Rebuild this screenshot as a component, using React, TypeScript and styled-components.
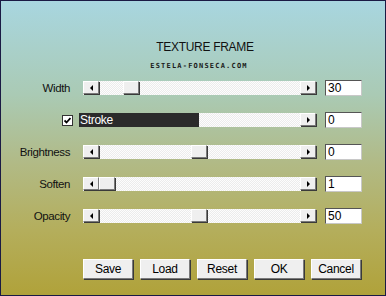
import React from 'react';
import styled, {createGlobalStyle, css} from 'styled-components';

const GlobalStyle = createGlobalStyle`
  html, body {
    margin: 0;
    padding: 0;
  }
  body {
    font-family: "Liberation Sans", Arial, sans-serif;
  }
`

const Frame = styled.div`
  box-sizing: border-box;
  width: 386px;
  height: 296px;
  border: 1px solid #1a1a44;
  background: linear-gradient(180deg, #a8d6e0 0%, #aacab4 32%, #b1ba86 55%, #b4ae5c 78%, #b0a23a 100%);
  display: flex;
  flex-direction: column;
  padding-top: 39px;
`

const Title = styled.div`
  font-size: 12px;
  line-height: 14px;
  letter-spacing: -0.3px;
  color: #111;
  text-align: center;
  padding-left: 24px;
`

const Watermark = styled.div`
  margin-top: 8px;
  font-family: "DejaVu Sans Mono", monospace;
  font-weight: bold;
  font-size: 7px;
  line-height: 8px;
  letter-spacing: 1.2px;
  color: #1a1a1a;
  text-align: center;
  padding-left: 12px;
`

const Rows = styled.div`
  margin-top: 10px;
  display: flex;
  flex-direction: column;
  gap: 16px;
`

const Row = styled.div`
  display: flex;
  align-items: center;
  height: 16px;
`

const Label = styled.div`
  width: 69px;
  margin-right: 13px;
  text-align: right;
  font-size: 11.5px;
  letter-spacing: -0.4px;
  color: #111;
  display: flex;
  justify-content: flex-end;
  align-items: center;
`

const bevel = css`
  box-sizing: border-box;
  background: #efefef;
  border-top: 1px solid #fff;
  border-left: 1px solid #fff;
  border-right: 1px solid #7a7a7a;
  border-bottom: 1px solid #7a7a7a;
  box-shadow: 1px 1px 0 #3a3a3a;
`

const Slider = styled.div`
  width: 233px;
  height: 14px;
  margin-right: 9px;
  display: flex;
  background-color: #fdfdfd;
  background-image: conic-gradient(#ececec 25%, transparent 0 50%, #ececec 0 75%, transparent 0);
  background-size: 2px 2px;
`

const ArrowButton = styled.div`
  ${bevel};
  width: 16px;
  height: 13px;
  display: flex;
  align-items: center;
  justify-content: center;
`

const Arrow = styled.span<{ $dir: 'left' | 'right' }>`
  width: 0;
  height: 0;
  border-top: 3px solid transparent;
  border-bottom: 3px solid transparent;
  ${({$dir}) => $dir === 'left'
    ? css`border-right: 3px solid #000;`
    : css`border-left: 3px solid #000;`}
`

const Track = styled.div`
  flex: 1;
  display: flex;
`

const Thumb = styled.div<{ $offset: number }>`
  ${bevel};
  width: 16px;
  height: 13px;
  margin-left: ${({$offset}) => $offset}px;
`

const StrokeBar = styled.div`
  width: 119px;
  height: 14px;
  margin-left: -4px;
  background: #2b2b2b;
  color: #fff;
  font-size: 12px;
  line-height: 14px;
  padding-left: 1px;
  letter-spacing: -0.3px;
`

const CheckBox = styled.div`
  box-sizing: border-box;
  width: 11px;
  height: 11px;
  margin-right: -3px;
  background: #fff;
  border: 1px solid #333;
  display: flex;
  align-items: center;
  justify-content: center;
`

const Edit = styled.div`
  box-sizing: border-box;
  width: 37px;
  height: 16px;
  background: #fff;
  border-top: 1px solid #555;
  border-left: 1px solid #555;
  border-right: 1px solid #c8c8c8;
  border-bottom: 1px solid #c8c8c8;
  font-size: 12px;
  line-height: 14px;
  padding-left: 2px;
  color: #000;
`

const Buttons = styled.div`
  margin-top: 35px;
  padding-left: 82px;
  display: flex;
  gap: 7px;
`

const Button = styled.div`
  ${bevel};
  width: 50px;
  height: 20px;
  display: flex;
  align-items: center;
  justify-content: center;
  font-size: 12px;
  letter-spacing: -0.3px;
  color: #000;
`

const TRACK = 184

type SliderRow = { label: string, value: number, min: number, max: number }

const rows: SliderRow[] = [
  {label: 'Width', value: 30, min: 0, max: 230},
  {label: 'Brightness', value: 0, min: -100, max: 100},
  {label: 'Soften', value: 1, min: 1, max: 100},
  {label: 'Opacity', value: 50, min: 0, max: 100},
]

const ScrollBar = ({value, min, max}: { value: number, min: number, max: number }) => (
  <Slider>
    <ArrowButton><Arrow $dir="left"/></ArrowButton>
    <Track>
      <Thumb $offset={Math.round((value - min) / (max - min) * TRACK)}/>
    </Track>
    <ArrowButton><Arrow $dir="right"/></ArrowButton>
  </Slider>
)

const SliderLine = ({row}: { row: SliderRow }) => (
  <Row>
    <Label>{row.label}</Label>
    <ScrollBar value={row.value} min={row.min} max={row.max}/>
    <Edit>{row.value}</Edit>
  </Row>
)

const App = () => {
  return (
    <>
      <GlobalStyle/>
      <Frame>
        <Title>TEXTURE FRAME</Title>
        <Watermark>ESTELA-FONSECA.COM</Watermark>
        <Rows>
          <SliderLine row={rows[0]}/>
          <Row>
            <Label>
              <CheckBox>
                <svg width="7" height="7" viewBox="0 0 7 7">
                  <path d="M0.5 3.5 L2.5 5.5 L6.5 1" stroke="#000" strokeWidth="1.8" fill="none"/>
                </svg>
              </CheckBox>
            </Label>
            <Slider>
              <StrokeBar>Stroke</StrokeBar>
              <Track/>
              <ArrowButton><Arrow $dir="right"/></ArrowButton>
            </Slider>
            <Edit>0</Edit>
          </Row>
          <SliderLine row={rows[1]}/>
          <SliderLine row={rows[2]}/>
          <SliderLine row={rows[3]}/>
        </Rows>
        <Buttons>
          <Button>Save</Button>
          <Button>Load</Button>
          <Button>Reset</Button>
          <Button>OK</Button>
          <Button>Cancel</Button>
        </Buttons>
      </Frame>
    </>
  );
};

export default App;
